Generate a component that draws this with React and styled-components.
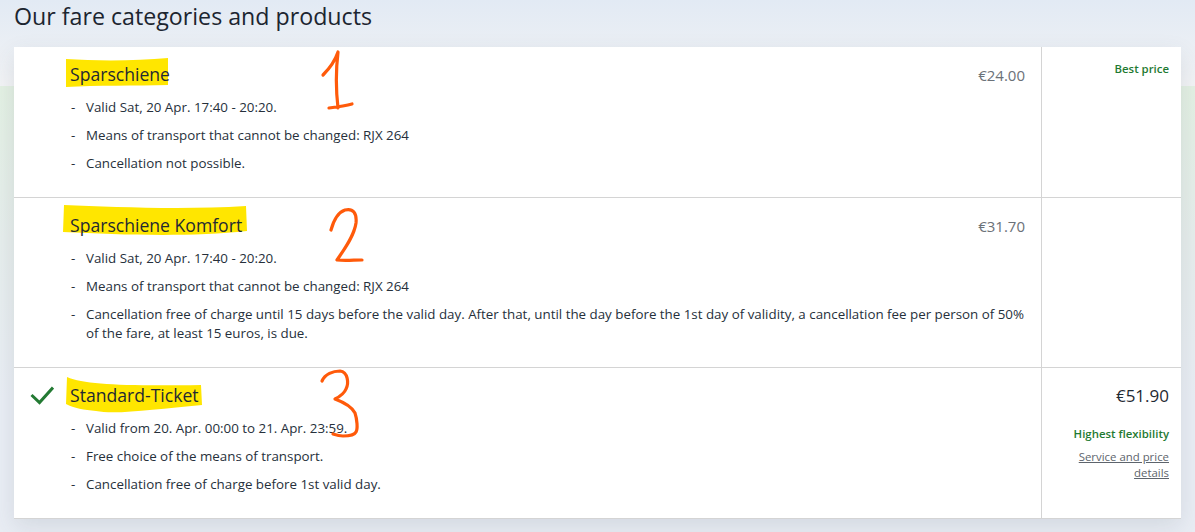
import styled, { createGlobalStyle } from "styled-components";

const GlobalStyle = createGlobalStyle`
  html, body {
    margin: 0;
    padding: 0;
  }
  body {
    font-family: "Open Sans", "Noto Sans", "Liberation Sans", sans-serif;
    color: #1f2933;
    background: #e9edf4;
  }
`;

const Page = styled.div`
  position: relative;
  width: 1195px;
  height: 532px;
  overflow: hidden;
  box-sizing: border-box;
  padding: 0 14px;
  background:
    linear-gradient(180deg, #e2eaf4 0%, #f2f3f5 86px, transparent 86px),
    linear-gradient(180deg, #e3f0e3 86px, #e6edec 240px, #e9edf4 400px);
`;

const Heading = styled.h1`
  margin: 0;
  height: 47px;
  font-size: 23.2px;
  line-height: 32px;
  font-weight: 400;
  color: #1c2530;
`;

const Card = styled.div`
  position: relative;
  background: #fff;
  box-shadow: 0 8px 22px rgba(60, 70, 90, 0.12);
`;

const Row = styled.div`
  display: grid;
  grid-template-columns: 56px 1fr 140px;
  height: ${(p) => p.$height}px;
  box-sizing: border-box;
  border-bottom: 1px solid #d4d4d4;
`;

const CheckCell = styled.div`
  padding: 16px 0 0 16px;
`;

const Main = styled.div`
  padding: 15px 16px 0 0;
`;

const TitleLine = styled.div`
  display: flex;
  justify-content: space-between;
  align-items: center;
  height: 24px;
  margin-bottom: 12px;
`;

const Title = styled.span`
  position: relative;
  font-size: 17.6px;
  color: #1f2933;
`;

const TitleText = styled.span`
  position: relative;
`;

const Marker = styled.svg`
  position: absolute;
  left: ${(p) => p.$left}px;
  top: ${(p) => p.$top}px;
`;

const MutedPrice = styled.span`
  font-size: 15px;
  color: #6b7178;
  position: relative;
  top: 1px;
`;

const Items = styled.ul`
  list-style: none;
  margin: 0;
  padding: 0;
  display: flex;
  flex-direction: column;
  gap: 9px;
`;

const Item = styled.li`
  position: relative;
  padding-left: 16px;
  font-size: 13.35px;
  line-height: 19px;
  color: #26303b;

  &::before {
    content: "-";
    position: absolute;
    left: 1px;
  }
`;

const Side = styled.div`
  border-left: 1px solid #d4d4d4;
  padding: 13px 12px 0 12px;
  text-align: right;
`;

const SidePrice = styled.div`
  font-size: 17px;
  line-height: 24px;
  color: #1f2933;
  margin: 3px 0 17px;
`;

const Badge = styled.div`
  font-size: 11.4px;
  line-height: 18px;
  font-weight: 600;
  color: #1f7a32;
`;

const DetailsLink = styled.a`
  display: block;
  margin-top: 6px;
  font-size: 11.4px;
  line-height: 16px;
  color: #5d646c;
  text-decoration: underline;
`;

const Scribble = styled.svg`
  position: absolute;
  left: ${(p) => p.$left}px;
  top: ${(p) => p.$top}px;
  fill: none;
  stroke: #ff5a0a;
  stroke-width: 3.2;
  stroke-linecap: round;
  stroke-linejoin: round;
`;

const fares = [
  {
    name: "Sparschiene",
    price: "€24.00",
    height: 151,
    badge: "Best price",
    marker: { left: -4, top: -4, w: 104, h: 30, d: "M0 1 C30 3 70 3 102 0 L102 27 C70 28 30 27 0 29 Z" },
    items: [
      "Valid Sat, 20 Apr. 17:40 - 20:20.",
      "Means of transport that cannot be changed: RJX 264",
      "Cancellation not possible.",
    ],
  },
  {
    name: "Sparschiene Komfort",
    price: "€31.70",
    height: 170,
    marker: { left: -7, top: -8, w: 185, h: 32, d: "M1 0 C50 2 120 5 183 1 L184 26 C130 32 60 30 0 27 Z" },
    items: [
      "Valid Sat, 20 Apr. 17:40 - 20:20.",
      "Means of transport that cannot be changed: RJX 264",
      "Cancellation free of charge until 15 days before the valid day. After that, until the day before the 1st day of validity, a cancellation fee per person of 50% of the fare, at least 15 euros, is due.",
    ],
  },
  {
    name: "Standard-Ticket",
    height: 151,
    selected: true,
    sidePrice: "€51.90",
    badge: "Highest flexibility",
    link: "Service and price details",
    marker: { left: -4, top: -6, w: 137, h: 40, d: "M1 0 C20 8 60 9 135 8 L136 28 C90 32 50 38 30 34 C18 33 8 31 0 27 Z" },
    items: [
      "Valid from 20. Apr. 00:00 to 21. Apr. 23:59.",
      "Free choice of the means of transport.",
      "Cancellation free of charge before 1st valid day.",
    ],
  },
];

function App() {
  return (
    <>
      <GlobalStyle />
      <Page>
        <Heading>Our fare categories and products</Heading>
        <Card>
          {fares.map((fare) => (
            <Row key={fare.name} $height={fare.height}>
              <CheckCell>
                {fare.selected && (
                  <svg width="24" height="24" viewBox="0 0 24 24" fill="none" stroke="#237a33" strokeWidth="3">
                    <path d="M1.5 11 L9.5 18.5 L23 3.5" />
                  </svg>
                )}
              </CheckCell>
              <Main>
                <TitleLine>
                  <Title>
                    <Marker $left={fare.marker.left} $top={fare.marker.top} width={fare.marker.w} height={fare.marker.h}>
                      <path d={fare.marker.d} fill="#ffe600" />
                    </Marker>
                    <TitleText>{fare.name}</TitleText>
                  </Title>
                  {fare.price && <MutedPrice>{fare.price}</MutedPrice>}
                </TitleLine>
                <Items>
                  {fare.items.map((text) => (
                    <Item key={text}>{text}</Item>
                  ))}
                </Items>
              </Main>
              <Side>
                {fare.sidePrice && <SidePrice>{fare.sidePrice}</SidePrice>}
                {fare.badge && <Badge>{fare.badge}</Badge>}
                {fare.link && <DetailsLink>{fare.link}</DetailsLink>}
              </Side>
            </Row>
          ))}

          <Scribble $left={305} $top={2} width="40" height="62" viewBox="0 0 40 62">
            <path d="M4 26 C10 20 16 12 19 3 C17 20 17 42 19 59 M10 59 C18 58 26 57 33 55" />
          </Scribble>
          <Scribble $left={315} $top={160} width="40" height="58" viewBox="0 0 40 58">
            <path d="M2 23 C5 12 10 5 16 3 C24 1 28 6 27 16 C25 30 14 44 8 53 C16 54 25 53 33 53" />
          </Scribble>
          <Scribble $left={305} $top={322} width="42" height="70" viewBox="0 0 42 70">
            <path d="M3 12 C6 5 14 2 21 2 C29 3 30 14 27 20 C25 25 20 28 16 30 C24 33 33 38 36 44 C38 50 39 60 37 63 C35 67 28 67 24 67 C20 67 17 66 14 65" />
          </Scribble>
        </Card>
      </Page>
    </>
  );
}

export default App;
